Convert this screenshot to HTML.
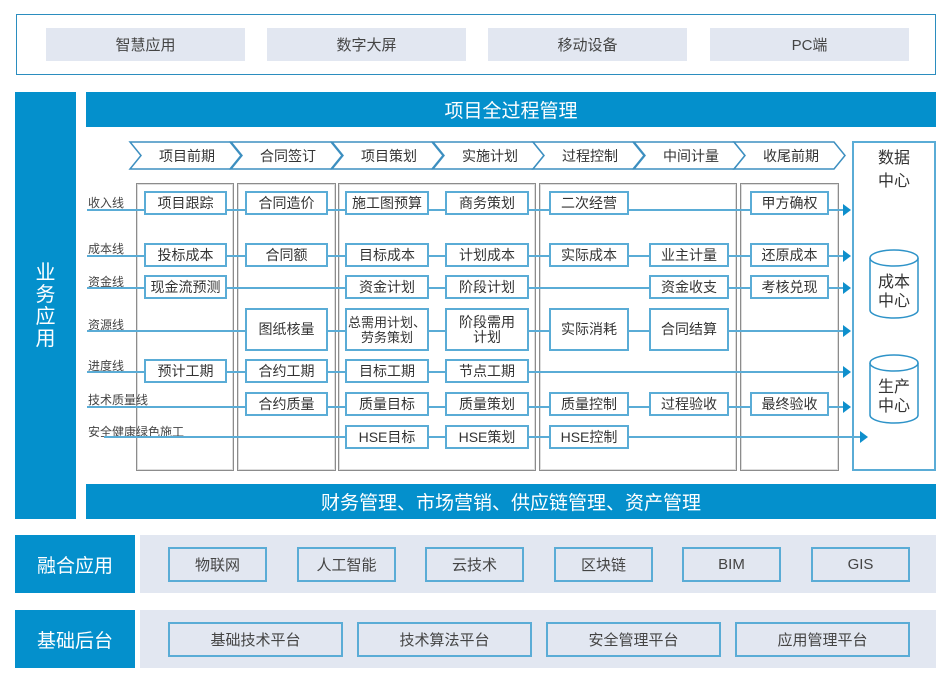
<!DOCTYPE html>
<html><head><meta charset="utf-8"><style>
*{margin:0;padding:0;box-sizing:border-box}
body{width:949px;height:685px;background:#fff;position:relative;overflow:hidden;font-family:"Liberation Sans","Noto Sans CJK SC",sans-serif;color:#333}
.a{position:absolute}
.btn{position:absolute;background:#e2e7f1;display:flex;align-items:center;justify-content:center;font-size:15px;color:#444}
.blue{position:absolute;background:#0490cc;color:#fff;display:flex;align-items:center;justify-content:center}
.col{position:absolute;top:183px;height:288px;border:1px solid #8c8c8c;box-shadow:inset 0 0 0 1px #ddd}
.bx{position:absolute;height:24px;border:2px solid #5aacd6;background:#fff;display:flex;align-items:center;justify-content:center;font-size:14px;color:#333;line-height:15px;text-align:center;white-space:nowrap}
.ln{position:absolute;height:2px;background:#5aacd6}
.lb{position:absolute;left:88px;font-size:12px;color:#444}
.arr{position:absolute;width:0;height:0;border-top:6px solid transparent;border-bottom:6px solid transparent;border-left:8px solid #0e8fcc}
.fb{position:absolute;border:2px solid #5aacd6;background:#e2e7f1;display:flex;align-items:center;justify-content:center;font-size:15px;color:#444}
</style></head><body>
<div class="a" style="left:16px;top:14px;width:920px;height:61px;border:1px solid #2b8dbf"></div>
<div class="btn" style="left:46px;top:28px;width:199px;height:33px">智慧应用</div>
<div class="btn" style="left:267px;top:28px;width:199px;height:33px">数字大屏</div>
<div class="btn" style="left:488px;top:28px;width:199px;height:33px">移动设备</div>
<div class="btn" style="left:710px;top:28px;width:199px;height:33px">PC端</div>

<div class="blue" style="left:15px;top:92px;width:61px;height:427px;font-size:20px;line-height:22px;text-align:center">业<br>务<br>应<br>用</div>
<div class="blue" style="left:86px;top:92px;width:850px;height:35px;font-size:19px">项目全过程管理</div>
<div class="blue" style="left:86px;top:484px;width:850px;height:35px;font-size:19px">财务管理、市场营销、供应链管理、资产管理</div>

<svg class="a" style="left:0;top:0" width="949" height="685">
<g fill="#fff" stroke="#3d8fc0" stroke-width="1.5">
<path d="M130 142 H230 L241 155.5 L230 169 H130 L141 155.5 Z"/>
<path d="M231 142 H331 L342 155.5 L331 169 H231 L242 155.5 Z"/>
<path d="M332 142 H432 L443 155.5 L432 169 H332 L343 155.5 Z"/>
<path d="M433 142 H533 L544 155.5 L533 169 H433 L444 155.5 Z"/>
<path d="M533 142 H633 L644 155.5 L633 169 H533 L544 155.5 Z"/>
<path d="M634 142 H734 L745 155.5 L734 169 H634 L645 155.5 Z"/>
<path d="M734 142 H834 L845 155.5 L834 169 H734 L745 155.5 Z"/>
</g>
<g font-size="14" fill="#333" text-anchor="middle" font-family="Liberation Sans,Noto Sans CJK SC,sans-serif">
<text x="187" y="161">项目前期</text><text x="288" y="161">合同签订</text><text x="389" y="161">项目策划</text><text x="490" y="161">实施计划</text><text x="590" y="161">过程控制</text><text x="691" y="161">中间计量</text><text x="791" y="161">收尾前期</text>
</g>
</svg>

<div class="col" style="left:136px;width:98px"></div>
<div class="col" style="left:237px;width:99px"></div>
<div class="col" style="left:338px;width:198px"></div>
<div class="col" style="left:539px;width:198px"></div>
<div class="col" style="left:740px;width:99px"></div>
<div class="a" style="left:852px;top:141px;width:84px;height:330px;border:2px solid #5aacd6;background:#fff"></div>
<div class="a" style="left:852px;top:147px;width:84px;text-align:center;font-size:16px;line-height:23px;color:#333">数据<br>中心</div>

<div class="lb" style="top:194px">收入线</div>
<div class="lb" style="top:240px">成本线</div>
<div class="lb" style="top:273px">资金线</div>
<div class="lb" style="top:316px">资源线</div>
<div class="lb" style="top:357px">进度线</div>
<div class="lb" style="top:391px">技术质量线</div>
<div class="lb" style="top:423px">安全健康绿色施工</div>

<div class="ln" style="left:87px;top:209px;width:756px"></div><div class="arr" style="left:843px;top:204px"></div>
<div class="ln" style="left:87px;top:255px;width:756px"></div><div class="arr" style="left:843px;top:250px"></div>
<div class="ln" style="left:87px;top:287px;width:756px"></div><div class="arr" style="left:843px;top:282px"></div>
<div class="ln" style="left:87px;top:330px;width:756px"></div><div class="arr" style="left:843px;top:325px"></div>
<div class="ln" style="left:87px;top:371px;width:756px"></div><div class="arr" style="left:843px;top:366px"></div>
<div class="ln" style="left:87px;top:406px;width:756px"></div><div class="arr" style="left:843px;top:401px"></div>
<div class="ln" style="left:104px;top:436px;width:756px"></div><div class="arr" style="left:860px;top:431px"></div>

<div class="bx" style="left:144px;top:191px;width:83px">项目跟踪</div>
<div class="bx" style="left:245px;top:191px;width:83px">合同造价</div>
<div class="bx" style="left:345px;top:191px;width:84px">施工图预算</div>
<div class="bx" style="left:445px;top:191px;width:84px">商务策划</div>
<div class="bx" style="left:549px;top:191px;width:80px">二次经营</div>
<div class="bx" style="left:750px;top:191px;width:79px">甲方确权</div>

<div class="bx" style="left:144px;top:243px;width:83px">投标成本</div>
<div class="bx" style="left:245px;top:243px;width:83px">合同额</div>
<div class="bx" style="left:345px;top:243px;width:84px">目标成本</div>
<div class="bx" style="left:445px;top:243px;width:84px">计划成本</div>
<div class="bx" style="left:549px;top:243px;width:80px">实际成本</div>
<div class="bx" style="left:649px;top:243px;width:80px">业主计量</div>
<div class="bx" style="left:750px;top:243px;width:79px">还原成本</div>

<div class="bx" style="left:144px;top:275px;width:83px">现金流预测</div>
<div class="bx" style="left:345px;top:275px;width:84px">资金计划</div>
<div class="bx" style="left:445px;top:275px;width:84px">阶段计划</div>
<div class="bx" style="left:649px;top:275px;width:80px">资金收支</div>
<div class="bx" style="left:750px;top:275px;width:79px">考核兑现</div>

<div class="bx" style="left:245px;top:308px;width:83px;height:43px">图纸核量</div>
<div class="bx" style="left:345px;top:308px;width:84px;height:43px;font-size:13px">总需用计划、<br>劳务策划</div>
<div class="bx" style="left:445px;top:308px;width:84px;height:43px">阶段需用<br>计划</div>
<div class="bx" style="left:549px;top:308px;width:80px;height:43px">实际消耗</div>
<div class="bx" style="left:649px;top:308px;width:80px;height:43px">合同结算</div>

<div class="bx" style="left:144px;top:359px;width:83px">预计工期</div>
<div class="bx" style="left:245px;top:359px;width:83px">合约工期</div>
<div class="bx" style="left:345px;top:359px;width:84px">目标工期</div>
<div class="bx" style="left:445px;top:359px;width:84px">节点工期</div>

<div class="bx" style="left:245px;top:392px;width:83px">合约质量</div>
<div class="bx" style="left:345px;top:392px;width:84px">质量目标</div>
<div class="bx" style="left:445px;top:392px;width:84px">质量策划</div>
<div class="bx" style="left:549px;top:392px;width:80px">质量控制</div>
<div class="bx" style="left:649px;top:392px;width:80px">过程验收</div>
<div class="bx" style="left:750px;top:392px;width:79px">最终验收</div>

<div class="bx" style="left:345px;top:425px;width:84px">HSE目标</div>
<div class="bx" style="left:445px;top:425px;width:84px">HSE策划</div>
<div class="bx" style="left:549px;top:425px;width:80px">HSE控制</div>

<svg class="a" style="left:0;top:0" width="949" height="685">
<g fill="#fff" stroke="#2e93c8" stroke-width="1.5">
<path d="M870 258 V310 A24 8 0 0 0 918 310 V258"/><ellipse cx="894" cy="258" rx="24" ry="8"/>
<path d="M870 363 V415 A24 8 0 0 0 918 415 V363"/><ellipse cx="894" cy="363" rx="24" ry="8"/>
</g>
<g font-size="16" fill="#333" text-anchor="middle" font-family="Liberation Sans,Noto Sans CJK SC,sans-serif">
<text x="894" y="287">成本</text><text x="894" y="306">中心</text>
<text x="894" y="392">生产</text><text x="894" y="411">中心</text>
</g>
</svg>

<div class="blue" style="left:15px;top:535px;width:120px;height:58px;font-size:19px">融合应用</div>
<div class="a" style="left:140px;top:535px;width:796px;height:58px;background:#e2e7f1"></div>
<div class="fb" style="left:168px;top:547px;width:99px;height:35px">物联网</div>
<div class="fb" style="left:297px;top:547px;width:99px;height:35px">人工智能</div>
<div class="fb" style="left:425px;top:547px;width:99px;height:35px">云技术</div>
<div class="fb" style="left:554px;top:547px;width:99px;height:35px">区块链</div>
<div class="fb" style="left:682px;top:547px;width:99px;height:35px">BIM</div>
<div class="fb" style="left:811px;top:547px;width:99px;height:35px">GIS</div>

<div class="blue" style="left:15px;top:610px;width:120px;height:58px;font-size:19px">基础后台</div>
<div class="a" style="left:140px;top:610px;width:796px;height:58px;background:#e2e7f1"></div>
<div class="fb" style="left:168px;top:622px;width:175px;height:35px">基础技术平台</div>
<div class="fb" style="left:357px;top:622px;width:175px;height:35px">技术算法平台</div>
<div class="fb" style="left:546px;top:622px;width:175px;height:35px">安全管理平台</div>
<div class="fb" style="left:735px;top:622px;width:175px;height:35px">应用管理平台</div>
</body></html>
